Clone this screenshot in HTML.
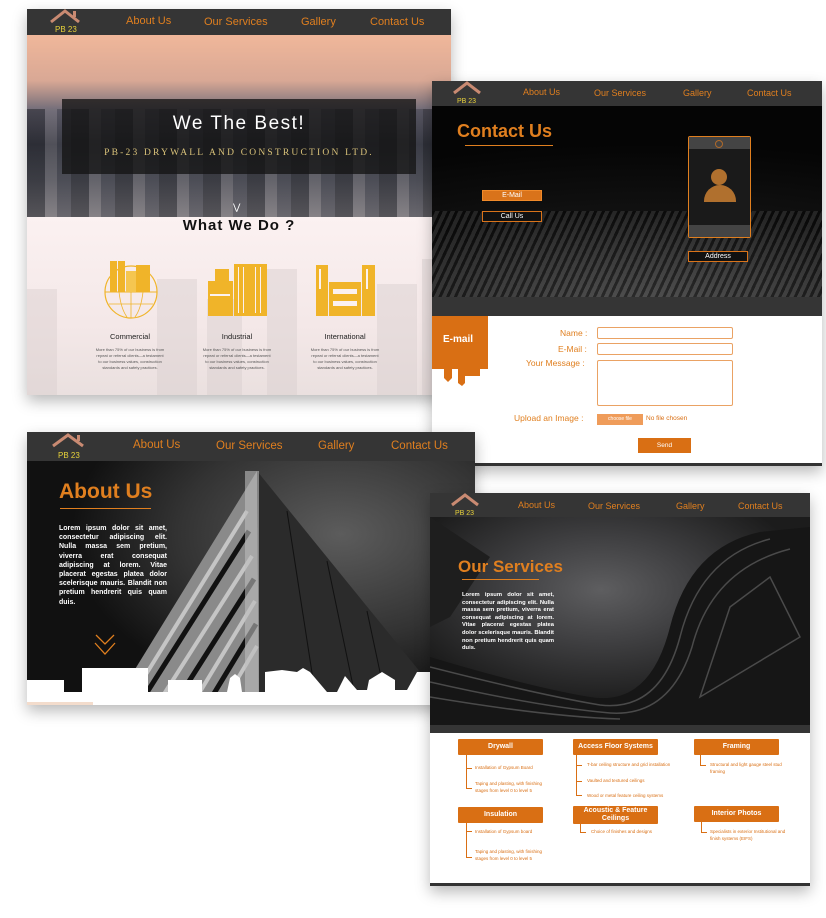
<!DOCTYPE html>
<html><head><meta charset="utf-8">
<style>
*{margin:0;padding:0;box-sizing:border-box}
body{width:826px;height:918px;background:#fff;position:relative;overflow:hidden;font-family:"Liberation Sans",sans-serif}
.p{position:absolute;overflow:hidden;box-shadow:0 6px 14px rgba(0,0,0,.28)}
.nav{position:absolute;left:0;top:0;right:0;background:#353535}
.nav span{position:absolute;color:#e07f1f;white-space:nowrap}
.logo{position:absolute}
.abs{position:absolute}
.or{color:#e07f1f}
.lorem{position:absolute;color:#fff;font-size:7px;line-height:9.2px;text-align:justify;font-weight:bold}
.svc{position:absolute;background:#d96f14;color:#fff;font-size:7px;font-weight:bold;text-align:center;border-radius:1px}
.it{position:absolute;color:#d96f14;font-size:4.5px;line-height:7px}
.br{position:absolute;border-left:1px solid #d96f14}
.tk{position:absolute;border-top:1px solid #d96f14;width:6px}
</style></head><body>

<!-- PANEL 1 HOME -->
<div class="p" style="left:27px;top:9px;width:424px;height:386px;background:#f8eeee">
 <div class="abs" style="left:0;top:26px;width:424px;height:182px;background:linear-gradient(180deg,#f0b79a 0%,#d9a895 25%,#6d6a78 42%,#3b3e48 60%,#5a5c64 80%,#8d8a8e 100%)"></div>
 <div class="abs" style="left:0;top:100px;width:424px;height:108px;background:repeating-linear-gradient(90deg,rgba(30,30,36,.5) 0 18px,rgba(120,115,120,.35) 18px 30px,rgba(60,60,70,.45) 30px 44px)"></div>
 <div class="abs" style="left:35px;top:90px;width:354px;height:75px;background:rgba(20,20,20,.78)"></div>
 <div class="abs" style="left:0;top:104px;width:424px;text-align:center;color:#fff;font-size:19px;letter-spacing:1.5px">We The Best!</div>
 <div class="abs" style="left:0;top:139px;width:424px;text-align:center;color:#d9c27a;font-family:'Liberation Serif',serif;font-size:9.5px;letter-spacing:2.2px">PB-23 DRYWALL AND CONSTRUCTION LTD.</div>
 <div class="abs" style="left:206px;top:193px;color:#fff;font-size:9px">&#8897;</div>
 <div class="abs" style="left:0;top:208px;width:424px;height:178px;background:linear-gradient(180deg,#fbf1f1,#f4e8e8 60%,#eae0df)"></div>
 <svg class="abs" style="left:0;top:240px" width="424" height="146"><g fill="#d9cfcf" opacity=".45"><rect x="0" y="40" width="30" height="106"/><rect x="130" y="30" width="40" height="116"/><rect x="180" y="50" width="35" height="96"/><rect x="240" y="20" width="30" height="126"/><rect x="350" y="35" width="40" height="111"/><rect x="395" y="10" width="29" height="136"/></g></svg>
 <div class="abs" style="left:0;top:208px;width:424px;text-align:center;font-size:15px;font-weight:bold;letter-spacing:1px;color:#111">What We Do ?</div>
 <svg class="abs" style="left:0;top:250px" width="424" height="70">
  <g fill="#f0b429" stroke="#f0b429">
   <circle cx="104" cy="33" r="26" fill="none" stroke-width="1.2"/>
   <line x1="78" y1="33" x2="130" y2="33"/><path d="M104 33V59M92 33Q94 50 100 58M116 33Q114 50 108 58M82 45H126" fill="none" stroke-width=".8"/>
   <rect x="83" y="2" width="7" height="31" stroke="none"/><rect x="91" y="2" width="7" height="31" stroke="none"/><rect x="99" y="12" width="10" height="21" stroke="none" fill="#f5c650"/><rect x="109" y="6" width="14" height="27" stroke="none"/>
   <rect x="181" y="22" width="25" height="35" stroke="none"/><rect x="188" y="10" width="14" height="12" stroke="none"/><rect x="207" y="5" width="17" height="52" stroke="none"/><rect x="224" y="5" width="16" height="52" stroke="none"/>
   <rect x="289" y="6" width="12" height="51" stroke="none"/><rect x="302" y="23" width="32" height="34" stroke="none"/><rect x="335" y="6" width="13" height="51" stroke="none"/>
  </g>
  <g fill="#fbf1f1"><rect x="306" y="30" width="24" height="5"/><rect x="306" y="42" width="24" height="5"/><rect x="183" y="35" width="20" height="2"/><rect x="211" y="8" width="1" height="46"/><rect x="216" y="8" width="1" height="46"/><rect x="228" y="8" width="1" height="46"/><rect x="233" y="8" width="1" height="46"/><rect x="292" y="10" width="2" height="20"/><rect x="339" y="10" width="2" height="20"/></g>
 </svg>
 <div class="abs" style="left:58px;top:323px;width:90px;text-align:center;font-size:7.5px;color:#222">Commercial</div>
 <div class="abs" style="left:165px;top:323px;width:90px;text-align:center;font-size:7.5px;color:#222">Industrial</div>
 <div class="abs" style="left:273px;top:323px;width:90px;text-align:center;font-size:7.5px;color:#222">International</div>
 <div class="abs" style="left:68px;top:338px;width:70px;text-align:center;font-size:4px;line-height:6px;color:#555">More than 75% of our business is from repeat or referral clients—a testament to our business values, construction standards and safety practices.</div>
 <div class="abs" style="left:175px;top:338px;width:70px;text-align:center;font-size:4px;line-height:6px;color:#555">More than 75% of our business is from repeat or referral clients—a testament to our business values, construction standards and safety practices.</div>
 <div class="abs" style="left:283px;top:338px;width:70px;text-align:center;font-size:4px;line-height:6px;color:#555">More than 75% of our business is from repeat or referral clients—a testament to our business values, construction standards and safety practices.</div>
 <div class="nav" style="height:26px">
  <svg class="logo" style="left:20px;top:0" width="40" height="26"><path d="M4 13L18 2L32 13" fill="none" stroke="#c98a72" stroke-width="3"/><rect x="26" y="2" width="3" height="6" fill="#c98a72"/><text x="8" y="23" font-size="8" fill="#e8d23a" font-family="Liberation Sans">PB 23</text></svg>
  <span style="left:99px;top:6px;font-size:11px">About Us</span>
  <span style="left:177px;top:7px;font-size:11px">Our Services</span>
  <span style="left:274px;top:7px;font-size:11px">Gallery</span>
  <span style="left:343px;top:7px;font-size:11px">Contact Us</span>
 </div>
</div>

<!-- PANEL 2 CONTACT -->
<div class="p" style="left:432px;top:81px;width:390px;height:385px;background:#fff">
 <div class="abs" style="left:0;top:25px;width:390px;height:191px;background:radial-gradient(ellipse 140% 90% at 55% 110%,#4a4a4a 0%,#2a2a2a 35%,#111 60%,#050505 100%)"></div>
 <div class="abs" style="left:0;top:130px;width:390px;height:86px;background:repeating-linear-gradient(115deg,rgba(0,0,0,.5) 0 3px,rgba(140,140,140,.25) 3px 7px);opacity:.7"></div>
 <div class="abs" style="left:25px;top:40px;font-size:18px;font-weight:bold;color:#e07f1f">Contact Us</div>
 <div class="abs" style="left:33px;top:64px;width:88px;border-top:1.5px solid #e07f1f"></div>
 <div class="abs" style="left:50px;top:109px;width:60px;height:11px;background:#d9731a;border:1px solid #f08a2a;color:#fff;font-size:7px;text-align:center;line-height:9px">E-Mail</div>
 <div class="abs" style="left:50px;top:130px;width:60px;height:11px;background:#111;border:1px solid #d9731a;color:#fff;font-size:7px;text-align:center;line-height:9px">Call Us</div>
 <div class="abs" style="left:256px;top:55px;width:63px;height:102px;border:1.5px solid #e07f1f;border-radius:2px;background:#1a1a1a">
  <div class="abs" style="left:0;top:0;width:100%;height:12px;background:#444"></div>
  <div class="abs" style="left:26px;top:3px;width:8px;height:8px;border:1px solid #b06a2a;border-radius:50%"></div>
  <div class="abs" style="left:22px;top:32px;width:16px;height:16px;border-radius:50%;background:#b0702e"></div>
  <div class="abs" style="left:15px;top:48px;width:32px;height:17px;border-radius:16px 16px 0 0;background:#b0702e"></div>
  <div class="abs" style="left:0;bottom:0;width:100%;height:12px;background:#444"></div>
 </div>
 <div class="abs" style="left:256px;top:170px;width:60px;height:11px;background:#111;border:1px solid #d9731a;color:#fff;font-size:7px;text-align:center;line-height:9px">Address</div>
 <div class="abs" style="left:0;top:216px;width:390px;height:19px;background:#353535"></div>
 <svg class="abs" style="left:0;top:235px" width="56" height="72"><path d="M0 0H56V53H48V60H33V67L30 70L26 67V53H20V62L16 66L12 62V53H0Z" fill="#d96f14"/></svg>
 <div class="abs" style="left:11px;top:253px;color:#fff;font-size:10px;font-weight:bold">E-mail</div>
 <div class="abs or" style="left:128px;top:247px;font-size:8.5px">Name :</div>
 <div class="abs or" style="left:126px;top:263px;font-size:8.5px">E-Mail :</div>
 <div class="abs or" style="left:94px;top:277px;font-size:8.5px">Your Message :</div>
 <div class="abs or" style="left:82px;top:332px;font-size:8.5px">Upload an Image :</div>
 <div class="abs" style="left:165px;top:246px;width:136px;height:12px;border:1px solid #eaa264;border-radius:2px"></div>
 <div class="abs" style="left:165px;top:262px;width:136px;height:12px;border:1px solid #eaa264;border-radius:2px"></div>
 <div class="abs" style="left:165px;top:279px;width:136px;height:46px;border:1px solid #eaa264;border-radius:2px"></div>
 <div class="abs" style="left:165px;top:333px;width:46px;height:11px;background:#ef9c5a;color:#fff;font-size:5px;text-align:center;line-height:11px">choose file</div>
 <div class="abs" style="left:214px;top:334px;font-size:6.5px;color:#d96f14">No file chosen</div>
 <div class="abs" style="left:206px;top:357px;width:53px;height:15px;background:#d96f14;color:#fff;font-size:6.5px;text-align:center;line-height:15px">Send</div>
 <div class="abs" style="left:0;top:382px;width:390px;height:3px;background:#333"></div>
 <div class="nav" style="height:25px">
  <svg class="logo" style="left:18px;top:0" width="36" height="25"><path d="M4 12L17 2L30 12" fill="none" stroke="#c98a72" stroke-width="3"/><text x="7" y="22" font-size="7" fill="#e8d23a" font-family="Liberation Sans">PB 23</text></svg>
  <span style="left:91px;top:6px;font-size:9px">About Us</span>
  <span style="left:162px;top:7px;font-size:9px">Our Services</span>
  <span style="left:251px;top:7px;font-size:9px">Gallery</span>
  <span style="left:315px;top:7px;font-size:9px">Contact Us</span>
 </div>
</div>

<!-- PANEL 3 ABOUT -->
<div class="p" style="left:27px;top:432px;width:448px;height:273px;background:#fff">
 <div class="abs" style="left:0;top:29px;width:448px;height:244px;background:radial-gradient(ellipse 60% 70% at 70% 30%,#5c5c5c,#333 60%,#111 100%)"></div>
 <svg class="abs" style="left:0;top:29px" width="448" height="244">
  <polygon points="86,244 230,10 232,244" fill="#8a8a8a"/>
  <polygon points="230,10 420,244 232,244" fill="#2b2b2b"/>
  <g stroke="#d0d0d0" stroke-width="4" opacity=".85"><line x1="100" y1="244" x2="220" y2="50"/><line x1="130" y1="244" x2="225" y2="95"/><line x1="165" y1="244" x2="228" y2="140"/><line x1="195" y1="244" x2="230" y2="185"/></g>
  <g stroke="#111" stroke-width="5"><line x1="112" y1="244" x2="222" y2="70"/><line x1="147" y1="244" x2="227" y2="118"/><line x1="180" y1="244" x2="229" y2="163"/></g>
  <rect x="218" y="10" width="14" height="234" fill="#bdbdbd" opacity=".6"/>
  <g stroke="#111" stroke-width="1"><line x1="260" y1="50" x2="290" y2="244"/><line x1="300" y1="100" x2="330" y2="244"/><line x1="340" y1="150" x2="360" y2="244"/></g>
 </svg>
 <div class="abs" style="left:32px;top:48px;font-size:21px;font-weight:bold;color:#e07f1f">About Us</div>
 <div class="abs" style="left:33px;top:76px;width:91px;border-top:1.5px solid #e07f1f"></div>
 <div class="lorem" style="left:32px;top:92px;width:108px">Lorem ipsum dolor sit amet, consectetur adipiscing elit. Nulla massa sem pretium, viverra erat consequat adipiscing at lorem. Vitae placerat egestas platea dolor scelerisque mauris. Blandit non pretium hendrerit quis quam duis.</div>
 <svg class="abs" style="left:66px;top:201px" width="24" height="24"><path d="M3 2L12 11L21 2M2 10L12 21L22 10" fill="none" stroke="#e07f1f" stroke-width="1.3"/></svg>
 <svg class="abs" style="left:0;top:0" width="448" height="273"><polygon points="0,273 0,248 37,248 37,260 55,260 55,236 121,236 121,260 141,260 141,248 175,248 175,260 200,260 203,246 208,242 213,246 215,260 238,260 238,240 255,238 270,240 276,236 283,240 300,260 310,260 318,244 330,258 340,258 342,248 355,240 368,248 368,258 380,258 390,240 395,240 448,240 448,273" fill="#fff"/><rect x="0" y="270" width="66" height="3" fill="#f3dccc"/></svg>
 <div class="nav" style="height:29px">
  <svg class="logo" style="left:22px;top:0" width="40" height="29"><path d="M4 14L19 3L34 14" fill="none" stroke="#c98a72" stroke-width="3"/><rect x="28" y="3" width="3" height="6" fill="#c98a72"/><text x="9" y="26" font-size="8" fill="#e8d23a" font-family="Liberation Sans">PB 23</text></svg>
  <span style="left:106px;top:7px;font-size:11.5px">About Us</span>
  <span style="left:189px;top:8px;font-size:11.5px">Our Services</span>
  <span style="left:291px;top:8px;font-size:11.5px">Gallery</span>
  <span style="left:364px;top:8px;font-size:11.5px">Contact Us</span>
 </div>
</div>

<!-- PANEL 4 SERVICES -->
<div class="p" style="left:430px;top:493px;width:380px;height:393px;background:#fff">
 <div class="abs" style="left:0;top:24px;width:380px;height:208px;background:radial-gradient(ellipse 55% 55% at 45% 35%,#5e5e60 0%,#404042 45%,#1c1c1c 100%)"></div>
 <svg class="abs" style="left:0;top:24px" width="380" height="208">
  <path d="M0 140Q100 170 160 180Q220 190 240 110Q260 30 330 15L380 10V208H0Z" fill="#161616"/>
  <g stroke="#4a4a4a" stroke-width="1.5" fill="none"><path d="M0 150Q110 178 170 188Q230 195 250 120Q270 40 340 22"/><path d="M0 165Q110 190 180 196Q240 200 262 130Q282 52 360 32"/><path d="M0 180Q120 200 190 202"/><path d="M270 180L300 90L340 60L370 120Z"/></g>
  <path d="M0 0L60 40L20 100L0 110Z" fill="#1e1e1e"/>
 </svg>
 <div class="abs" style="left:28px;top:64px;font-size:17px;font-weight:bold;color:#e07f1f">Our Services</div>
 <div class="abs" style="left:32px;top:86px;width:77px;border-top:1.5px solid #e07f1f"></div>
 <div class="lorem" style="left:32px;top:99px;width:92px;font-size:5.8px;line-height:7.6px">Lorem ipsum dolor sit amet, consectetur adipiscing elit. Nulla massa sem pretium, viverra erat consequat adipiscing at lorem. Vitae placerat egestas platea dolor scelerisque mauris. Blandit non pretium hendrerit quis quam duis.</div>
 <div class="abs" style="left:0;top:232px;width:380px;height:8px;background:#353535"></div>

 <div class="svc" style="left:28px;top:246px;width:85px;height:16px;line-height:16px">Drywall</div>
 <div class="svc" style="left:143px;top:246px;width:85px;height:16px;line-height:16px">Access Floor Systems</div>
 <div class="svc" style="left:264px;top:246px;width:85px;height:16px;line-height:16px">Framing</div>
 <div class="svc" style="left:28px;top:314px;width:85px;height:16px;line-height:16px">Insulation</div>
 <div class="svc" style="left:143px;top:313px;width:85px;height:18px;line-height:8px;padding-top:1px">Acoustic &amp; Feature Ceilings</div>
 <div class="svc" style="left:264px;top:313px;width:85px;height:16px;line-height:16px">Interior Photos</div>

 <div class="br" style="left:36px;top:262px;height:33px"></div><div class="tk" style="left:36px;top:275px"></div><div class="tk" style="left:36px;top:295px"></div>
 <div class="it" style="left:45px;top:271px">Installation of Gypsum Board</div>
 <div class="it" style="left:45px;top:287px;width:80px">Taping and plasting, with finishing stages from level 0 to level 5</div>
 <div class="br" style="left:146px;top:262px;height:40px"></div><div class="tk" style="left:146px;top:272px"></div><div class="tk" style="left:146px;top:288px"></div><div class="tk" style="left:146px;top:302px"></div>
 <div class="it" style="left:157px;top:268px">T-bar ceiling structure and grid installation</div>
 <div class="it" style="left:157px;top:284px">Vaulted and textured ceilings</div>
 <div class="it" style="left:157px;top:299px">Wood or metal feature ceiling systems</div>
 <div class="br" style="left:270px;top:262px;height:10px"></div><div class="tk" style="left:270px;top:272px"></div>
 <div class="it" style="left:280px;top:268px;width:75px">Structural and light gauge steel stud framing</div>
 <div class="br" style="left:36px;top:330px;height:34px"></div><div class="tk" style="left:36px;top:338px"></div><div class="tk" style="left:36px;top:364px"></div>
 <div class="it" style="left:45px;top:335px">Installation of Gypsum board</div>
 <div class="it" style="left:45px;top:355px;width:80px">Taping and plasting, with finishing stages from level 0 to level 5</div>
 <div class="br" style="left:150px;top:331px;height:8px"></div><div class="tk" style="left:150px;top:339px"></div>
 <div class="it" style="left:161px;top:335px">Choice of finishes and designs</div>
 <div class="br" style="left:271px;top:329px;height:10px"></div><div class="tk" style="left:271px;top:339px"></div>
 <div class="it" style="left:280px;top:335px;width:80px">Specialists in exterior Institutional and finish systems (EIFS)</div>
 <div class="abs" style="left:0;top:390px;width:380px;height:3px;background:#333"></div>
 <div class="nav" style="height:24px">
  <svg class="logo" style="left:18px;top:0" width="36" height="24"><path d="M4 12L17 2L30 12" fill="none" stroke="#c98a72" stroke-width="3"/><text x="7" y="22" font-size="7" fill="#e8d23a" font-family="Liberation Sans">PB 23</text></svg>
  <span style="left:88px;top:7px;font-size:9px">About Us</span>
  <span style="left:158px;top:8px;font-size:9px">Our Services</span>
  <span style="left:246px;top:8px;font-size:9px">Gallery</span>
  <span style="left:308px;top:8px;font-size:9px">Contact Us</span>
 </div>
</div>
</body></html>
